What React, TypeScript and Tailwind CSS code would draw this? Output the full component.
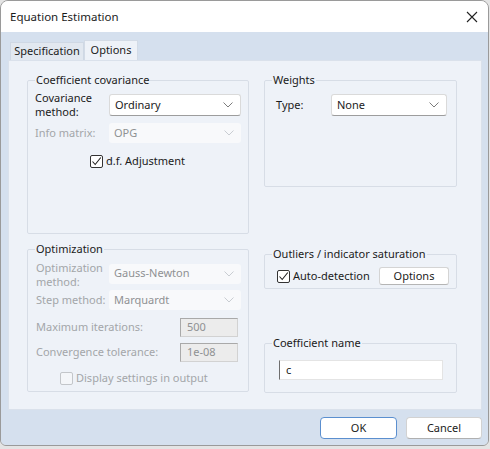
import clsx from "clsx";

const Chevron = ({ disabled }: { disabled?: boolean }) => (
  <svg width="10" height="6" viewBox="0 0 10 6">
    <polyline
      points="0.5,0.5 5,5 9.5,0.5"
      fill="none"
      stroke={disabled ? "#c9cdd2" : "#7c7c7c"}
      strokeWidth="1"
    />
  </svg>
);

const Dropdown = ({
  value,
  disabled,
  className,
}: {
  value: string;
  disabled?: boolean;
  className?: string;
}) => (
  <div
    className={clsx(
      "flex items-center justify-between pl-[5px] pr-[7px] rounded-[3px]",
      disabled
        ? "bg-[#f8f9fb] text-[#8f9193]"
        : "bg-white border border-[#dadada] border-b-[#9d9d9d] text-[#1b1b1b]",
      className
    )}
  >
    <span>{value}</span>
    <Chevron disabled={disabled} />
  </div>
);

const Checkbox = ({ checked, disabled }: { checked?: boolean; disabled?: boolean }) => (
  <div
    className={clsx(
      "w-[13px] h-[13px] rounded-[2px] border flex items-center justify-center",
      disabled ? "border-[#c3c6ca] bg-[#f4f6f9]" : "border-[#333] bg-white"
    )}
  >
    {checked && (
      <svg width="11" height="11" viewBox="0 0 11 11">
        <polyline points="1.5,5.5 4.2,8.5 9.8,1.5" fill="none" stroke="#222" strokeWidth="1.1" />
      </svg>
    )}
  </div>
);

const Group = ({
  title,
  className,
  children,
}: {
  title: string;
  className?: string;
  children: React.ReactNode;
}) => (
  <fieldset className={clsx("border border-[#d7dde6] rounded-[2px] px-[7px]", className)}>
    <legend className="px-[1px] leading-[14px] text-[#1b1b1b]">{title}</legend>
    {children}
  </fieldset>
);

const TextBox = ({ value, disabled, className }: { value: string; disabled?: boolean; className?: string }) => (
  <div
    className={clsx(
      "flex items-center px-[6px] border",
      disabled
        ? "bg-[#ececec] border-[#d2d2d2] border-l-[#a9a9a9] border-t-[#a9a9a9] text-[#8f9193]"
        : "bg-white border-[#e4e4e4] border-l-[#6e6e6e] text-[#1b1b1b]",
      className
    )}
  >
    {value}
  </div>
);

export default function App() {
  return (
    <div className="w-[490px] h-[449px] bg-[#e4e4e4] font-['Noto_Sans',sans-serif] text-[11px] text-[#1b1b1b]">
      <div className="w-[489px] h-[446px] border border-[#9a9a9a] rounded-t-[8px] rounded-b-[6px] overflow-hidden flex flex-col">
        {/* title bar */}
        <div className="h-[31px] bg-white flex items-center justify-between pl-[9px] pr-[10px] pt-[1px]">
          <span className="text-[11.5px]">Equation Estimation</span>
          <svg width="12" height="12" viewBox="0 0 12 12">
            <path d="M1 1 L11 11 M11 1 L1 11" stroke="#222" strokeWidth="1.1" />
          </svg>
        </div>

        <div className="flex-1 bg-[#d5e0ee] pl-[7px] pt-[8px]">
          {/* tabs */}
          <div className="flex items-end h-[20px]">
            <div className="ml-[2px] w-[74px] h-[18px] bg-[#e2e8f0] border border-b-0 border-[#cfd8e4] flex items-center justify-center">
              Specification
            </div>
            <div className="w-[54px] h-[20px] bg-[#eef2f8] border border-b-0 border-[#d3dbe6] flex items-center justify-center">
              Options
            </div>
          </div>

          {/* panel */}
          <div className="w-[474px] h-[350px] bg-[#eef2f8] border border-[#dae1eb] flex pl-[18px] pt-[12px]">
            {/* left column */}
            <div className="w-[222px] flex flex-col">
              <Group title="Coefficient covariance" className="h-[161px]">
                <div className="mt-[4px] h-[28px] flex items-center">
                  <div className="w-[74px] leading-[14px]">
                    Covariance
                    <br />
                    method:
                  </div>
                  <Dropdown value="Ordinary" className="w-[132px] h-[22px]" />
                </div>
                <div className="mt-[4px] h-[20px] flex items-center">
                  <div className="w-[74px] text-[#a3a6a9]">Info matrix:</div>
                  <Dropdown value="OPG" disabled className="w-[132px] h-[20px]" />
                </div>
                <div className="mt-[11px] h-[14px] flex items-center ml-[55px] gap-[3px]">
                  <Checkbox checked />
                  <span>d.f. Adjustment</span>
                </div>
              </Group>

              <Group title="Optimization" className="h-[150px] mt-[8px]">
                <div className="mt-[5px] h-[28px] flex items-center text-[#a3a6a9]">
                  <div className="w-[74px] leading-[14px] pl-[1px]">
                    Optimization
                    <br />
                    method:
                  </div>
                  <Dropdown value="Gauss-Newton" disabled className="w-[132px] h-[20px] -mt-[3px]" />
                </div>
                <div className="mt-[1px] h-[20px] flex items-center">
                  <div className="w-[74px] pl-[1px] text-[#a3a6a9] whitespace-nowrap">Step method:</div>
                  <Dropdown value="Marquardt" disabled className="w-[132px] h-[20px] text-[#7d7f82]" />
                </div>
                <div className="mt-[8px] h-[19px] flex items-center">
                  <div className="w-[145px] pl-[1px] text-[#a3a6a9]">Maximum iterations:</div>
                  <TextBox value="500" disabled className="w-[58px] h-[19px]" />
                </div>
                <div className="mt-[6px] h-[19px] flex items-center">
                  <div className="w-[145px] pl-[1px] text-[#a3a6a9]">Convergence tolerance:</div>
                  <TextBox value="1e-08" disabled className="w-[58px] h-[19px]" />
                </div>
                <div className="mt-[9px] h-[14px] flex items-center ml-[25px] gap-[3px] text-[#a3a6a9]">
                  <Checkbox disabled />
                  <span>Display settings in output</span>
                </div>
              </Group>
            </div>

            {/* right column */}
            <div className="w-[193px] ml-[15px] flex flex-col">
              <Group title="Weights" className="h-[114px]">
                <div className="mt-[4px] h-[28px] flex items-center">
                  <div className="w-[59px] pl-[4px]">Type:</div>
                  <Dropdown value="None" className="w-[116px] h-[22px]" />
                </div>
              </Group>

              <Group title="Outliers / indicator saturation" className="h-[42px] mt-[60px]">
                <div className="mt-[6px] h-[18px] flex items-center">
                  <div className="ml-[5px] flex items-center gap-[3px]">
                    <Checkbox checked />
                    <span>Auto-detection</span>
                  </div>
                  <div className="ml-auto w-[70px] h-[18px] bg-white border border-[#d4d4d4] border-b-[#b5b5b5] rounded-[3px] flex items-center justify-center">
                    Options
                  </div>
                </div>
              </Group>

              <Group title="Coefficient name" className="h-[57px] mt-[47px]">
                <div className="mt-[10px] ml-[7px]">
                  <TextBox value="c" className="w-[164px] h-[20px]" />
                </div>
              </Group>
            </div>
          </div>

          {/* buttons */}
          <div className="w-[474px] mt-[7px] flex justify-end gap-[9px]">
            <div className="w-[77px] h-[22px] bg-white border-[1.5px] border-[#5b8fcf] rounded-[4px] flex items-center justify-center">
              OK
            </div>
            <div className="w-[76px] h-[22px] bg-white border border-[#d2d2d2] border-b-[#b0b0b0] rounded-[4px] flex items-center justify-center">
              Cancel
            </div>
          </div>
        </div>
      </div>
    </div>
  );
}
